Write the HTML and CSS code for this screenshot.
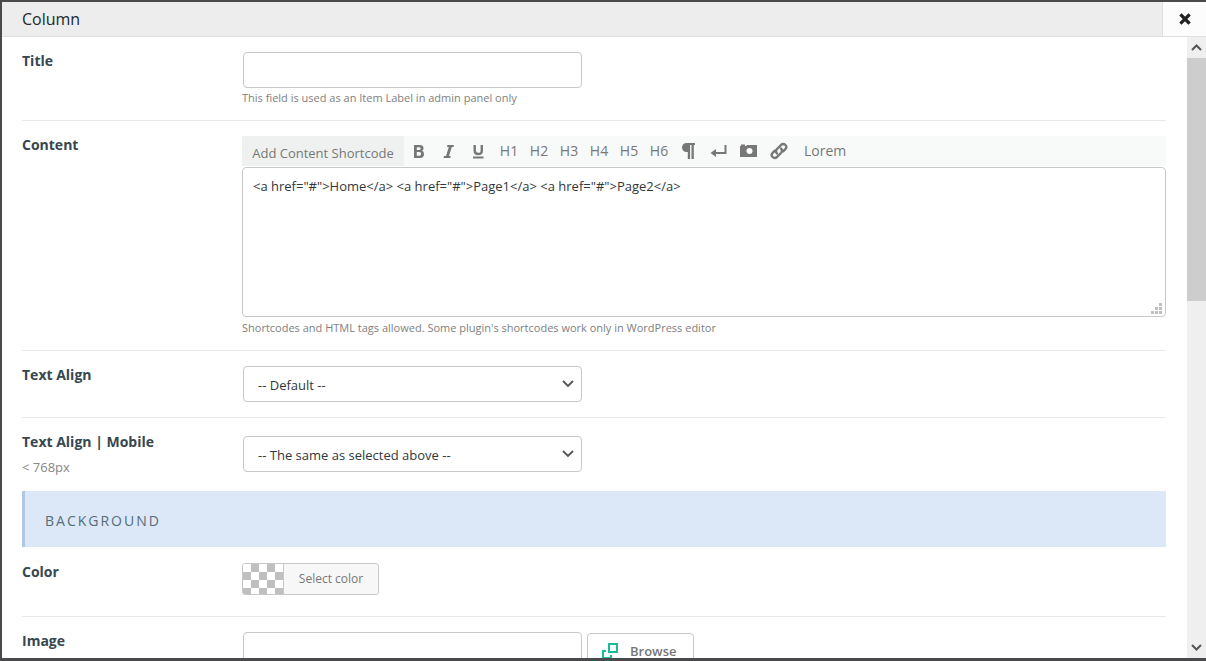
FILE: index.html
```html
<!DOCTYPE html>
<html lang="en">
<head>
<meta charset="utf-8">
<title>Column</title>
<link rel="stylesheet" href="styles.css">
</head>
<body>
<div class="dialog" role="dialog" aria-labelledby="dialog-title">
  <header class="dialog-header">
    <h1 class="dialog-title" id="dialog-title">Column</h1>
    <button class="close" type="button" aria-label="Close">
      <svg width="14" height="14" viewBox="0 0 14 14"><path d="M3.500 3.500l7 7M10.500 3.500l-7 7" stroke="currentColor" stroke-width="3.200" stroke-linecap="square"/></svg>
    </button>
  </header>
  <div class="dialog-body">
    <form class="fields">
      <div class="row">
        <div class="row-label"><label for="title">Title</label></div>
        <div class="row-control">
          <input class="box" type="text" id="title">
          <p class="hint">This field is used as an Item Label in admin panel only</p>
        </div>
      </div>
      <div class="row">
        <div class="row-label"><label for="content">Content</label></div>
        <div class="row-control">
          <div class="toolbar">
            <button class="shortcode" type="button">Add Content Shortcode</button>
            <button class="tool" type="button" aria-label="Bold"><svg width="18" height="18" viewBox="0 0 18 18"><path fill="currentColor" fill-rule="evenodd" d="M4 3h5.500q4 0 4 3.300 0 2-1.700 2.500Q14 9.300 14 12 14 16 10 16H4zm2.800 2.200v2.700h2.300q1.600 0 1.600-1.400 0-1.300-1.600-1.300zm0 4.800v3.700h2.600q1.700 0 1.700-1.800 0-1.900-1.700-1.900z"/></svg></button>
            <button class="tool" type="button" aria-label="Italic"><svg width="18" height="18" viewBox="0 0 18 18"><path fill="currentColor" d="M7.500 3H14l-.5 2h-1.700L9 14h1.700l-.5 2H3.500l.5-2h2L8.800 5H7z"/></svg></button>
            <button class="tool" type="button" aria-label="Underline"><svg width="18" height="18" viewBox="0 0 18 18"><path fill="none" stroke="currentColor" stroke-width="2.400" d="M4.700 3v5.500q0 3.500 3.600 3.500t3.500-3.500V3"/><path fill="currentColor" d="M3 14.500h10.500v2H3z"/></svg></button>
            <button class="tool" type="button">H1</button>
            <button class="tool" type="button">H2</button>
            <button class="tool" type="button">H3</button>
            <button class="tool" type="button">H4</button>
            <button class="tool" type="button">H5</button>
            <button class="tool" type="button">H6</button>
            <button class="tool" type="button" aria-label="Paragraph"><svg width="18" height="18" viewBox="0 0 18 18"><path fill="currentColor" d="M6.500 1H15v2h-1.200v14h-2.300V3h-1.400v14H7.800V10H6.500a4.500 4.500 0 0 1 0-9z"/></svg></button>
            <button class="tool" type="button" aria-label="Line break"><svg width="18" height="18" viewBox="0 0 18 18"><path fill="none" stroke="currentColor" stroke-width="2" d="M15.500 3v8H5"/><path fill="currentColor" d="M.5 11L6 7v8z"/></svg></button>
            <button class="tool" type="button" aria-label="Image"><svg width="18" height="18" viewBox="0 0 18 18"><path fill="currentColor" fill-rule="evenodd" d="M0 4h1V2.500h4V4h1.500V3H17v12H0zM9.500 5a3.800 3.800 0 1 0 .1 0z"/><path fill="currentColor" d="M5.500 5h8v8h-8z"/><circle cx="9.500" cy="9" r="3" fill="#fff"/></svg></button>
            <button class="tool" type="button" aria-label="Link"><svg width="18" height="18" viewBox="0 0 18 18"><g fill="none" stroke="currentColor" stroke-width="2.400" stroke-linecap="round" stroke-linejoin="round"><path d="M7 11.500Q5 9.200 7 7L11 3Q13.300 1 15.400 3T15.300 7.200L13.200 9.300"/><path d="M11 6.500Q13 8.800 11 11L7 15Q4.700 17 2.600 15T2.700 10.800L4.800 8.700"/></g></svg></button>
            <button class="tool tool-word" type="button">Lorem</button>
          </div>
          <div class="editor">
            <textarea class="editor-text" id="content">&lt;a href="#"&gt;Home&lt;/a&gt; &lt;a href="#"&gt;Page1&lt;/a&gt; &lt;a href="#"&gt;Page2&lt;/a&gt;</textarea>
            <svg class="grip" width="11" height="11" viewBox="0 0 11 11" aria-hidden="true"><path fill="#bfbfbf" d="M8 0h3v3H8zM4 4h3v3H4zM8 4h3v3H8zM0 8h3v3H0zM4 8h3v3H4zM8 8h3v3H8z"/></svg>
          </div>
          <p class="hint">Shortcodes and HTML tags allowed. Some plugin's shortcodes work only in WordPress editor</p>
        </div>
      </div>
      <div class="row row-select">
        <div class="row-label"><label for="align">Text Align</label></div>
        <div class="row-control">
          <select class="box select" id="align"><option>-- Default --</option></select>
        </div>
      </div>
      <div class="row row-mobile">
        <div class="row-label"><label for="align-mobile">Text Align | Mobile</label><p class="note">&lt; 768px</p></div>
        <div class="row-control">
          <select class="box select" id="align-mobile"><option>-- The same as selected above --</option></select>
        </div>
      </div>
      <h2 class="section">BACKGROUND</h2>
      <div class="row row-color">
        <div class="row-label"><label for="color">Color</label></div>
        <div class="row-control">
          <button class="color" type="button" id="color"><span class="swatch"></span><span class="color-text">Select color</span></button>
        </div>
      </div>
      <div class="row">
        <div class="row-label"><label for="image">Image</label></div>
        <div class="row-control upload">
          <input class="box" type="text" id="image">
          <button class="browse" type="button"><svg width="16" height="16" viewBox="0 0 16 16"><path fill="none" stroke="#1abc9c" stroke-width="2" d="M7 1h8v8H7zM4 8H1v7h8v-3"/></svg>Browse</button>
        </div>
      </div>
    </form>
    <div class="scrollbar" aria-hidden="true">
      <svg class="arrow" width="19" height="21" viewBox="0 0 19 21"><path d="M5 13l4.500-4.500L14 13" fill="none" stroke="#555" stroke-width="2"/></svg>
      <div class="track"><div class="thumb"></div></div>
      <svg class="arrow" width="19" height="21" viewBox="0 0 19 21"><path d="M5 8l4.500 4.500L14 8" fill="none" stroke="#555" stroke-width="2"/></svg>
    </div>
  </div>
</div>
</body>
</html>
```
FILE: styles.css
```css
* { box-sizing: border-box; }
body {
  margin: 0;
  background: #4a494b;
  color: #32373c;
  font: 13px/20px "Open Sans", "Noto Sans", sans-serif;
}
button, input, select, textarea { font: inherit; color: inherit; margin: 0; }
button { padding: 0; border: 0; background: none; }
svg { display: block; flex: none; }
h1, h2, p { margin: 0; }

.dialog {
  display: flex;
  flex-direction: column;
  height: 100vh;
  padding: 2px 0 3px 2px;
}
.dialog-header {
  display: flex;
  height: 35px;
  flex: none;
  background: #ededed;
  border-bottom: 1px solid #dfdfdf;
}
.dialog-title {
  flex: 1;
  padding-left: 20px;
  font-size: 16px;
  font-weight: 400;
  line-height: 34px;
  color: #23282d;
}
.close {
  display: grid;
  place-items: center;
  width: 44px;
  background: #fcfcfc;
  border-left: 1px solid #dfdfdf;
  color: #222;
}
.dialog-body {
  display: flex;
  flex: 1;
  min-height: 0;
  background: #fff;
}
.fields {
  flex: 1;
  min-width: 0;
  overflow: hidden;
  padding: 0 21px 0 20px;
}

.row {
  display: flex;
  padding: 15px 0 12px;
  border-bottom: 1px solid #e9e9e9;
}
.row-label {
  width: 220px;
  flex: none;
  padding-right: 20px;
  color: #37474f;
}
.row-label label {
  display: block;
  font-size: 14px;
  font-weight: 700;
  line-height: 18px;
}
.row-control { flex: 1; min-width: 0; }
.note { margin-top: 6px; color: #888; }
.hint { font-size: 11px; color: #808080; }
.row-select { padding-bottom: 15px; }
.row-mobile { padding-bottom: 14px; border-bottom: 0; }
.row-mobile .row-control { padding-top: 3px; }
.row-color { padding: 16px 0 21px; }

.box {
  display: block;
  width: 339px;
  height: 36px;
  margin-left: 1px;
  padding: 0 14px;
  border: 1px solid #c8c8c8;
  border-radius: 4px;
  background: #fff;
}
.select {
  appearance: none;
  padding-top: 2px;
  background: #fff url("data:image/svg+xml,%3Csvg xmlns='http://www.w3.org/2000/svg' width='12' height='8'%3E%3Cpath d='M1 1l5 5 5-5' fill='none' stroke='%23555' stroke-width='1.8'/%3E%3C/svg%3E") no-repeat right 7px center;
}

.toolbar {
  display: flex;
  height: 30px;
  margin-bottom: 1px;
  background: #f8faf9;
  color: #777;
}
.shortcode {
  width: 162px;
  padding-top: 4px;
  background: #eff1f0;
}
.tool {
  display: grid;
  place-items: center;
  width: 30px;
  font-size: 14px;
}
.tool-word { width: auto; padding: 0 10px; }

.editor { position: relative; margin-bottom: 1px; }
.editor-text {
  display: block;
  width: 100%;
  height: 150px;
  padding: 8px 10px;
  border: 1px solid #c8c8c8;
  border-radius: 4px;
  resize: none;
  background: #fff;
}
.grip { position: absolute; right: 4px; bottom: 3px; }

.section {
  border-left: 3px solid #b0c7e6;
  padding: 20px 20px 16px;
  background: #dce7f7;
  color: #546e7a;
  font-size: 14px;
  font-weight: 400;
  line-height: 20px;
  letter-spacing: 2px;
}

.color {
  display: flex;
  width: 137px;
  height: 32px;
  overflow: hidden;
  border: 1px solid #c8c8c8;
  border-radius: 3px;
  background: #f7f7f7;
  color: #777;
  font-size: 12px;
  line-height: 30px;
}
.swatch {
  width: 41px;
  height: 30px;
  border-right: 1px solid #c8c8c8;
  background: repeating-conic-gradient(#bfbfbf 0 25%, #fff 0 50%) 0 0 / 16px 16px;
}
.color-text { flex: 1; }

.upload { display: flex; align-items: flex-start; gap: 5px; }
.browse {
  display: flex;
  align-items: center;
  gap: 12px;
  height: 36px;
  margin-top: 1px;
  padding: 0 16px 0 14px;
  border: 1px solid #c8c8c8;
  border-radius: 4px;
  background: #fff;
  color: #777;
  font-weight: 600;
}

.scrollbar {
  display: flex;
  flex-direction: column;
  width: 19px;
  flex: none;
  background: #efefef;
}
.track { flex: 1; }
.thumb { height: 42%; background: #cdcdcd; }
```
